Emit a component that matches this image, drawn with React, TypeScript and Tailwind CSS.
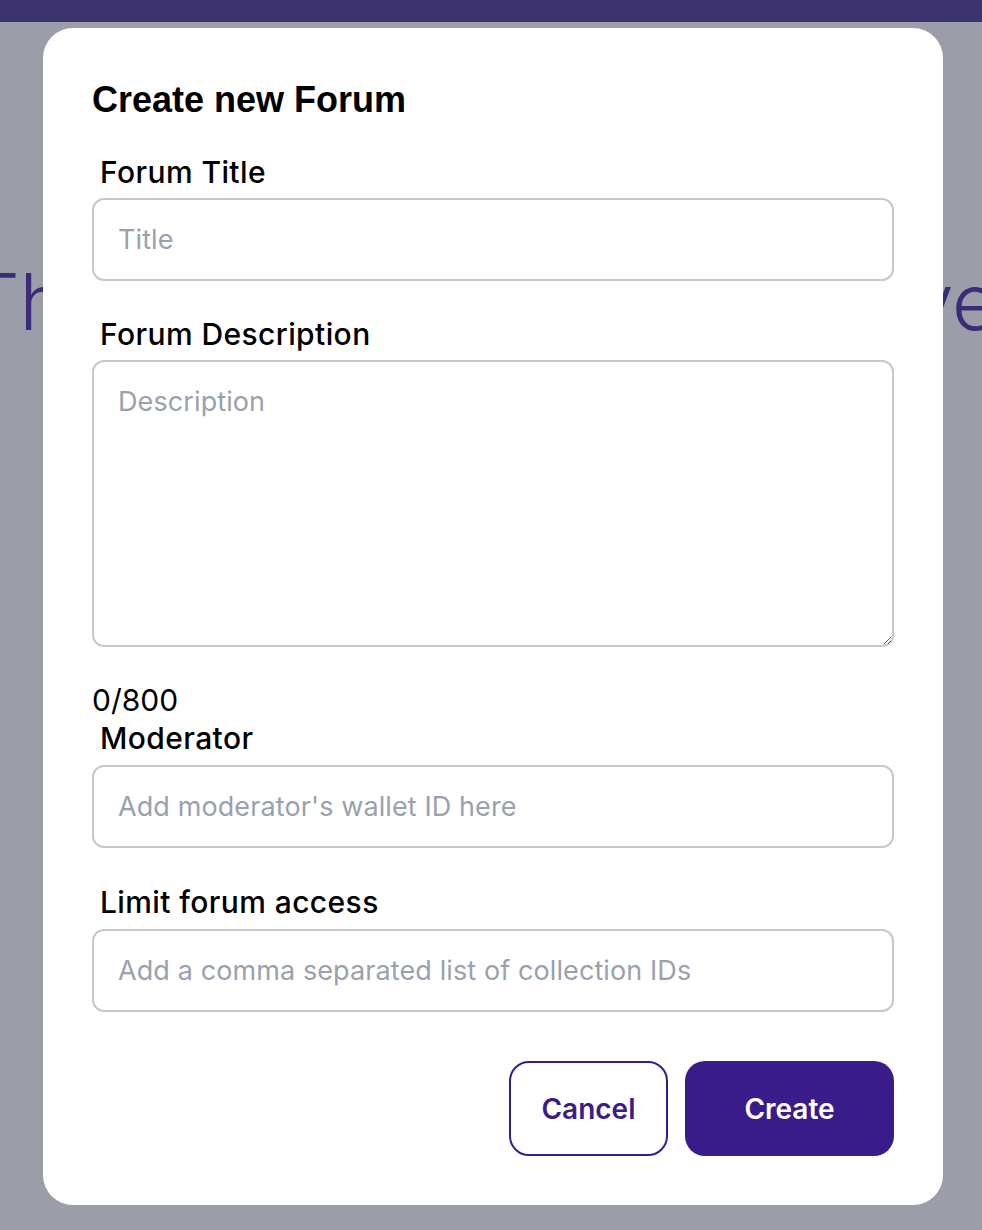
import React from "react";

const labelCls =
  "ml-2 text-[30px] leading-[35px] font-medium tracking-[0.4px] text-black";
const inputCls =
  "w-full h-[83px] rounded-[12px] border-2 border-[#c8c8ca] bg-white px-[24px] text-[27px] tracking-[0.1px] text-black outline-none placeholder:text-[#9aa1ae]";

export default function App() {
  return (
    <div
      className="relative w-full h-[1230px] overflow-hidden bg-[#9b9ea8]"
      style={{ fontFamily: "Inter, 'Noto Sans', sans-serif" }}
    >
      <div className="h-[22px] bg-[#3d346f]" />
      <div className="mt-[241px] ml-[-30px] whitespace-nowrap text-[78px] leading-[78px] font-light text-[#3b2c79] [word-spacing:7px]">
        There are no forums, we've
      </div>

      <div className="absolute left-[43px] top-[28px] w-[900px] rounded-[30px] bg-white px-[49px] pt-[50px] pb-[49px]">
        <h1
          className="text-[36px] leading-[43px] font-bold text-black"
          style={{ fontFamily: "'Liberation Sans', Arial, sans-serif" }}
        >
          Create new Forum
        </h1>

        <div className={`${labelCls} mt-[34px] mb-[8px]`}>Forum Title</div>
        <input className={inputCls} placeholder="Title" />

        <div className={`${labelCls} mt-[36px] mb-[8px]`}>Forum Description</div>
        <textarea
          className="block w-full h-[287px] rounded-[12px] border-2 border-[#c8c8ca] bg-white px-[24px] pt-[20px] text-[27px] tracking-[0.1px] leading-[39px] text-black outline-none placeholder:text-[#9aa1ae]"
          placeholder="Description"
        />

        <div className="mt-[36px] text-[30px] leading-[35px] text-black">0/800</div>
        <div className={`${labelCls} mt-[3px] mb-[9px]`}>Moderator</div>
        <input className={inputCls} placeholder="Add moderator's wallet ID here" />

        <div className={`${labelCls} mt-[37px] mb-[9px]`}>Limit forum access</div>
        <input
          className={inputCls}
          placeholder="Add a comma separated list of collection IDs"
        />

        <div className="mt-[49px] flex justify-end gap-[17px]">
          <button className="h-[95px] w-[159px] rounded-[20px] border-2 border-[#3a1d8a] bg-white text-[28px] font-semibold text-[#3a1d8a]">
            Cancel
          </button>
          <button className="h-[95px] w-[209px] rounded-[20px] bg-[#391b89] text-[28px] font-semibold text-white">
            Create
          </button>
        </div>
      </div>
    </div>
  );
}
